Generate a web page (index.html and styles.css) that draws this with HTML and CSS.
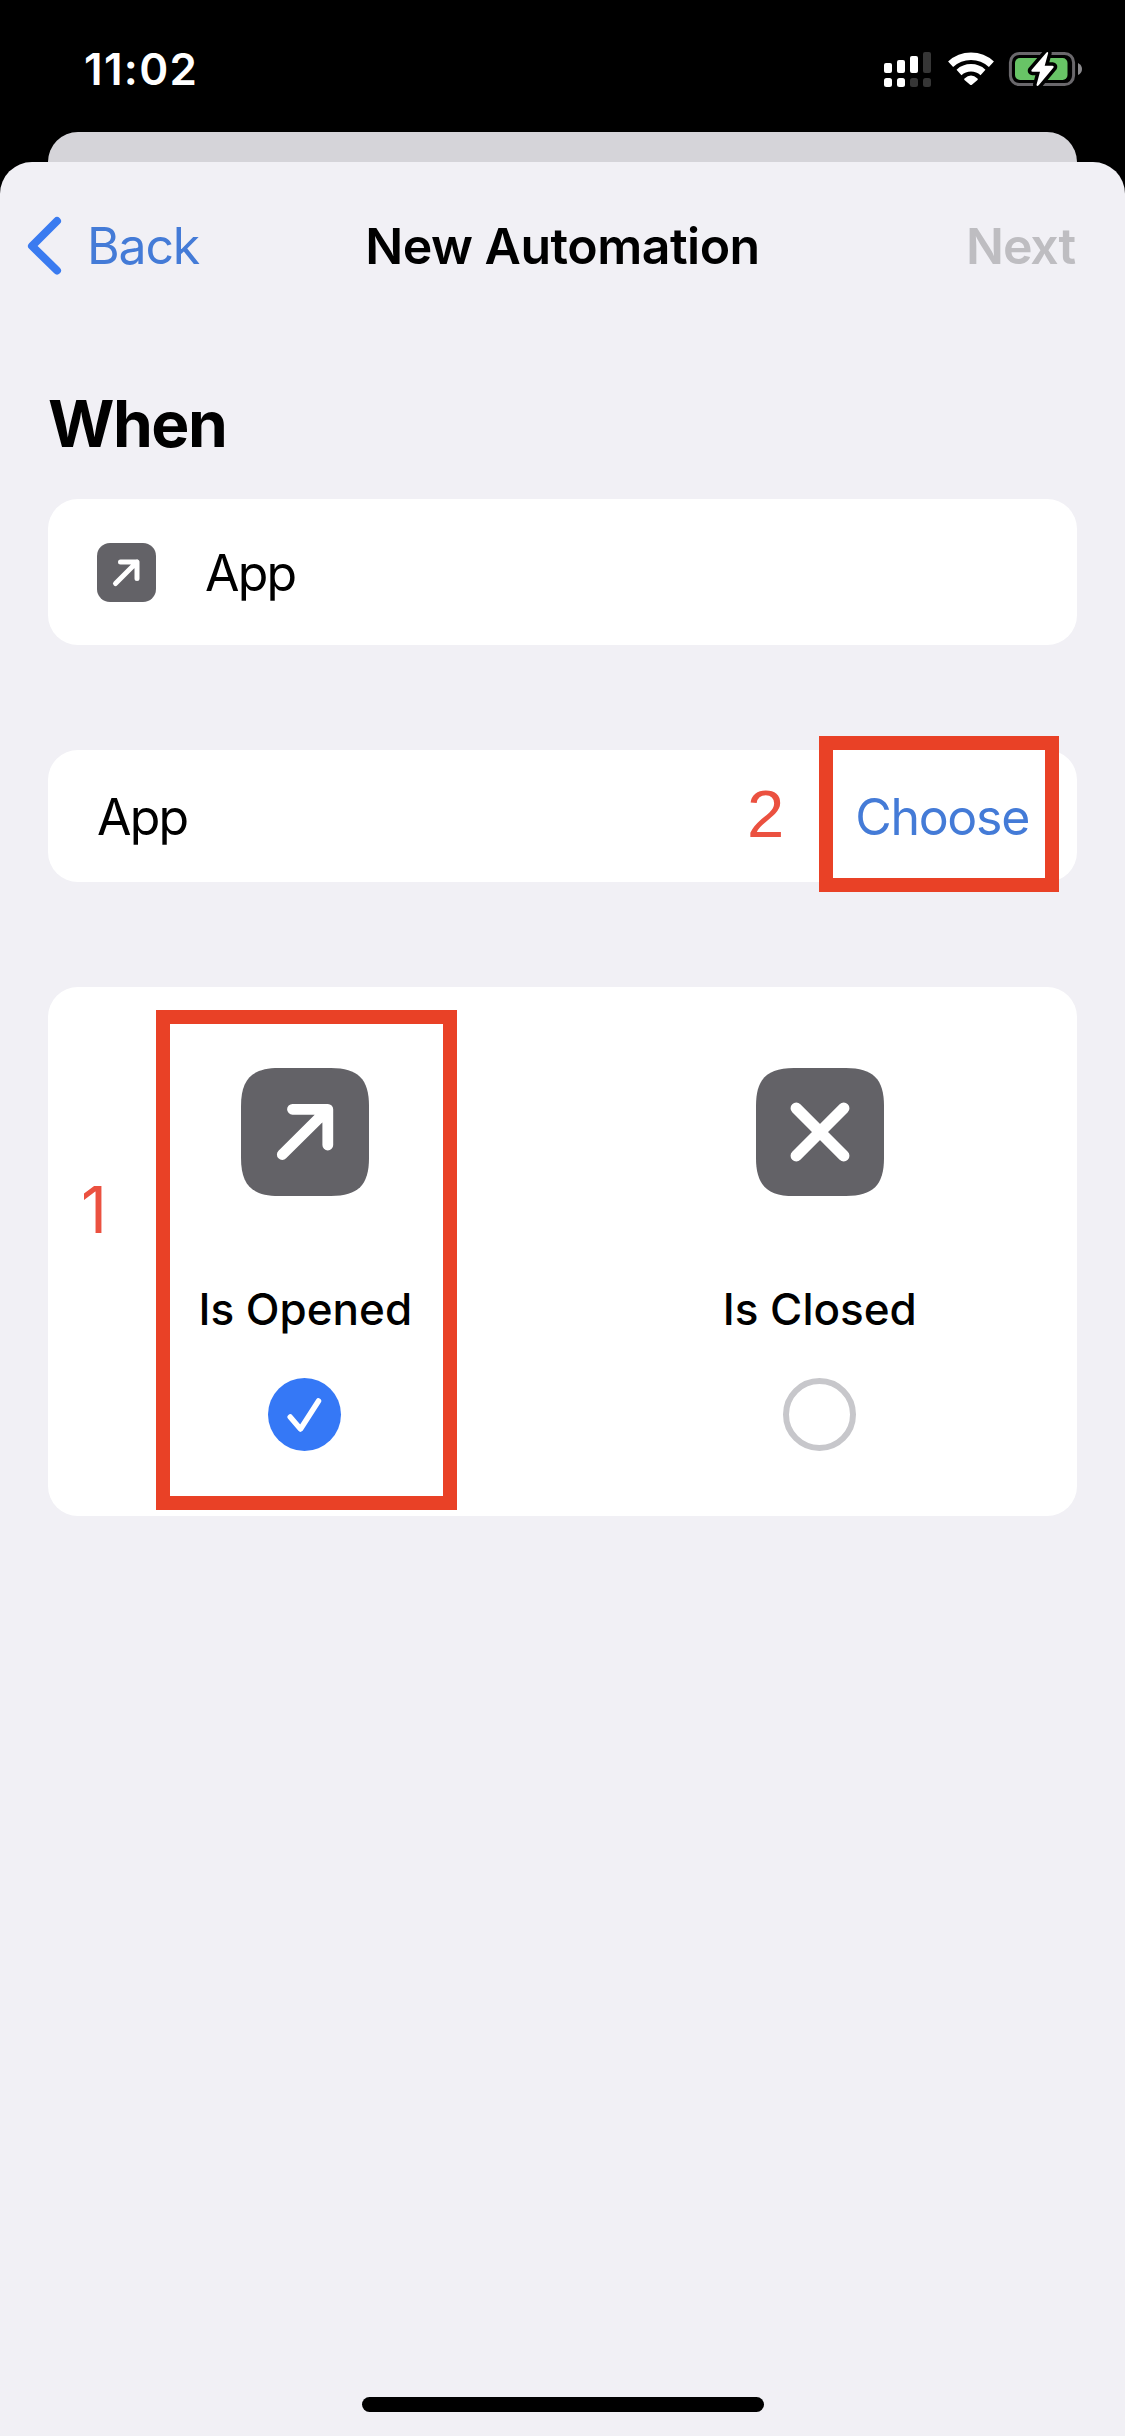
FILE: index.html
```html
<!DOCTYPE html>
<html lang="en">
<head>
<meta charset="utf-8">
<title>New Automation</title>
<link rel="stylesheet" href="styles.css">
</head>
<body>
<div class="screen">
  <header class="status">
    <span class="time">11:02</span>
    <svg class="status-icons" width="202" height="40" viewBox="882 50 202 40">
      <g fill="#fff">
        <rect x="884" y="63" width="8" height="10" rx="2"/>
        <rect x="897" y="60" width="8" height="13" rx="2"/>
        <rect x="910" y="56" width="8" height="17" rx="2"/>
        <rect x="884" y="78" width="8" height="9" rx="2.5"/>
        <rect x="897" y="78" width="8" height="9" rx="2.5"/>
      </g>
      <g fill="#363636">
        <rect x="923" y="52" width="8" height="21" rx="2"/>
        <rect x="910" y="78" width="8" height="9" rx="2.5"/>
        <rect x="923" y="78" width="8" height="9" rx="2.5"/>
      </g>
      <g fill="none" stroke="#fff" stroke-width="7.4">
        <path d="M950.6 64.2a30 30 0 0 1 40.8 0"/>
        <path d="M959 72.400a18 18 0 0 1 24 0"/>
      </g>
      <path d="M964.500 78.400q6.500-6 13 0 .8.800 0 1.600l-5.600 4.700q-.9.700-1.800 0l-5.600-4.700q-.8-.8 0-1.600z" fill="#fff"/>
      <rect x="1010.400" y="53.400" width="63.200" height="31.200" rx="9" fill="none" stroke="#6a686c" stroke-width="3"/>
      <rect x="1015" y="58" width="52.500" height="22" rx="5" fill="#68c466"/>
      <path d="M1078 63q4 2 4 6t-4 6z" fill="#8b8a8d"/>
      <path d="M1046.500 52.500 1031.500 70q-.8 1.500 1 1.700h7.500l-3.500 13q.3 2.300 2.200.6L1053.500 67.500q.8-1.500-1-1.700H1044.700l3.500-12.700q-.2-1.900-1.700-.6z" fill="#fff" stroke="#000" stroke-width="7" stroke-linejoin="round" paint-order="stroke"/>
    </svg>
  </header>
  <div class="back-card"></div>
  <main class="sheet">
    <nav class="nav">
      <a class="back"><svg width="35" height="60" viewBox="0 0 35 60"><path d="M30 5 5 30l25 24.500" fill="none" stroke="#3a7bf0" stroke-width="8" stroke-linecap="round" stroke-linejoin="round"/></svg><span class="back-text">Back</span></a>
      <h1 class="title">New Automation</h1>
      <span class="next">Next</span>
    </nav>
    <h2 class="heading">When</h2>
    <section class="card trigger">
      <svg class="trigger-icon" width="59" height="59" viewBox="0 0 59 59"><rect width="59" height="59" rx="13" fill="#636267"/><path d="M23.500 19H40v16.500M40 19 18.500 40.500" fill="none" stroke="#fff" stroke-width="5" stroke-linecap="round" stroke-linejoin="round"/></svg>
      <span class="row-text">App</span>
    </section>
    <section class="card picker">
      <span class="row-text">App</span>
      <a class="choose">Choose</a>
      <span class="step step-two">2</span>
      <span class="mark mark-choose"></span>
    </section>
    <section class="card options">
      <div class="option">
        <svg width="128" height="128" viewBox="0 0 128 128"><path d="M0 38C0 11 11 0 38 0H90C117 0 128 11 128 38V90C128 117 117 128 90 128H38C11 128 0 117 0 90Z" fill="#636267"/><path d="M51.500 41.300H86.800V77M86.800 41.300 41.300 86.500" fill="none" stroke="#fff" stroke-width="10.800" stroke-linecap="round" stroke-linejoin="round"/></svg>
        <span class="label">Is Opened</span>
        <svg width="74" height="73" viewBox="0 0 74 73"><circle cx="36.500" cy="36.500" r="36.500" fill="#3578f6"/><path d="M22.200 39 32.500 51 50.500 23" fill="none" stroke="#fff" stroke-width="5.500" stroke-linecap="round" stroke-linejoin="round"/></svg>
      </div>
      <div class="option">
        <svg width="128" height="128" viewBox="0 0 128 128"><path d="M0 38C0 11 11 0 38 0H90C117 0 128 11 128 38V90C128 117 117 128 90 128H38C11 128 0 117 0 90Z" fill="#636267"/><path d="M40.300 40.300 87.700 87.700M87.700 40.300 40.300 87.700" fill="none" stroke="#fff" stroke-width="11.500" stroke-linecap="round"/></svg>
        <span class="label">Is Closed</span>
        <svg width="73" height="73" viewBox="0 0 73 73"><circle cx="36.500" cy="36.500" r="33.500" fill="none" stroke="#c7c7cb" stroke-width="6"/></svg>
      </div>
      <span class="step step-one">1</span>
      <span class="mark mark-opened"></span>
    </section>
    <div class="home"></div>
  </main>
</div>
</body>
</html>
```
FILE: styles.css
```css
* { box-sizing: border-box; }
body { margin: 0; background: #000; font-family: Inter, "Liberation Sans", sans-serif; color: #000; }
svg { display: block; flex: none; }
.screen { width: 1125px; height: 2436px; display: flex; flex-direction: column; background: #000; overflow: hidden; }
.status { height: 132px; padding: 50px 41px 0 84px; display: flex; justify-content: space-between; align-items: flex-start; }
.time { color: #fff; font-size: 44px; line-height: 38px; font-weight: 600; letter-spacing: 1.3px; white-space: nowrap; }
.back-card { height: 30px; margin: 0 48px; border-radius: 30px 30px 0 0; background: #d5d4d9; }
.sheet { flex: 1; display: flex; flex-direction: column; padding: 0 48px; background: #f1f0f5; border-radius: 32px 32px 0 0; }
.nav { height: 168px; display: grid; grid-template-columns: 1fr auto 1fr; align-items: center; font-size: 50px; line-height: 60px; white-space: nowrap; }
.back { margin-left: -21px; display: flex; align-items: center; gap: 25px; color: #447bd7; letter-spacing: -1.2px; }
.title { margin: 0; font-size: 50px; font-weight: 600; letter-spacing: -.5px; }
.next { justify-self: end; margin-right: 2px; font-weight: 600; letter-spacing: -1.1px; color: #bebdc1; }
.heading { margin: 54px 0 0; height: 80px; font-size: 64px; line-height: 80px; font-weight: 700; letter-spacing: -1.5px; }
.card { position: relative; flex: none; background: #fff; border-radius: 30px; }
.trigger { height: 146px; margin-top: 35px; padding: 0 49px; display: flex; align-items: center; gap: 49px; }
.row-text, .choose { padding-top: 2px; font-size: 50px; line-height: 60px; letter-spacing: -1.3px; white-space: nowrap; }
.row-text { letter-spacing: -1.8px; }
.picker { height: 132px; margin-top: 105px; padding: 0 48px 0 49px; display: flex; align-items: center; justify-content: space-between; }
.choose { color: #447bd7; }
.options { height: 529px; margin-top: 105px; padding-top: 81px; display: grid; grid-template-columns: 1fr 1fr; }
.option { display: flex; flex-direction: column; align-items: center; }
.label { margin: 86px 0 42px; font-size: 44px; line-height: 54px; font-weight: 500; white-space: nowrap; }
.mark { position: absolute; border: 14px solid #e94126; }
.mark-choose { left: 771px; top: -14px; width: 240px; height: 156px; }
.mark-opened { left: 108px; top: 23px; width: 301px; height: 500px; }
.step { position: absolute; line-height: 76px; color: #eb5140; }
.step-two { left: 699px; top: 26px; font-family: "Liberation Sans", Arial, sans-serif; font-size: 67px; }
.step-one { left: 33px; top: 185px; font-size: 64px; }
.home { width: 402px; height: 15px; margin: auto auto 24px; border-radius: 8px; background: #000; }
```
